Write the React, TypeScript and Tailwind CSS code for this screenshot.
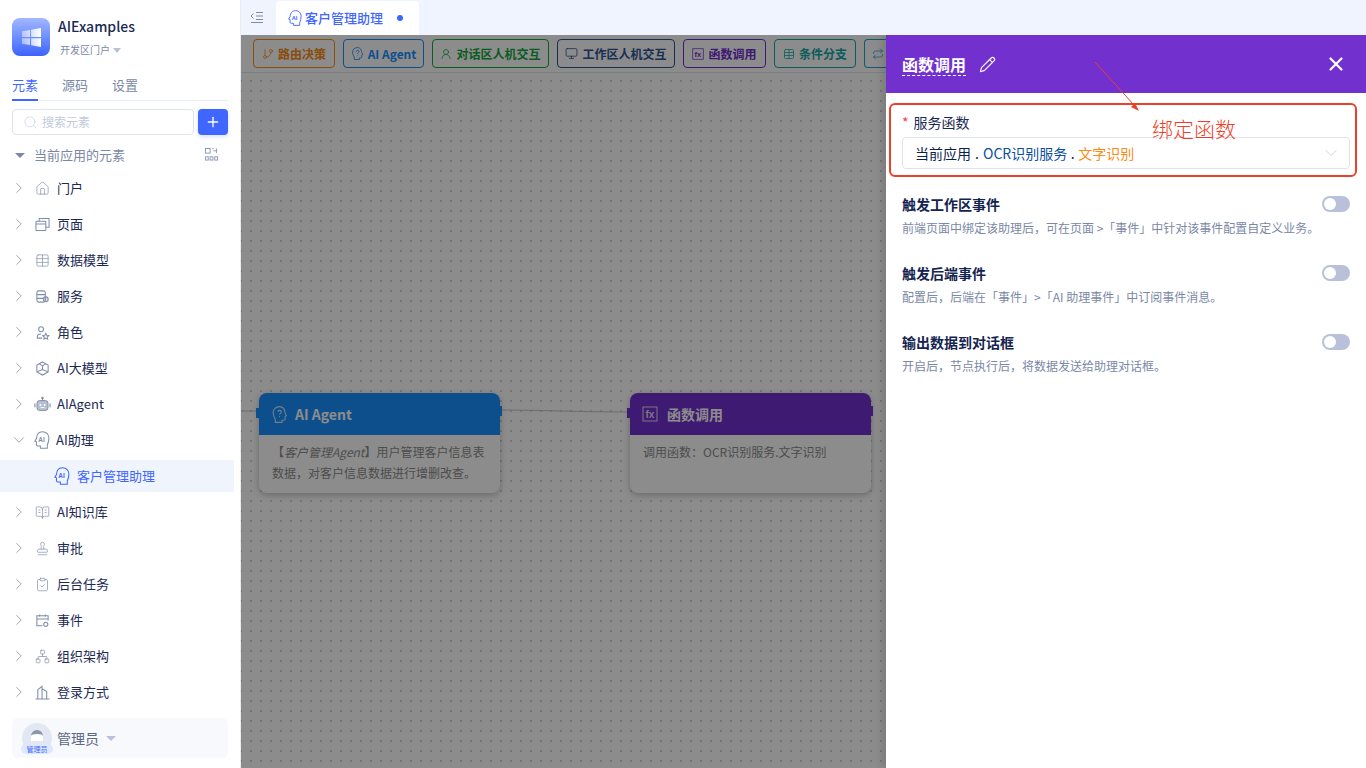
import React from "react";
import { ChevronRight, ChevronDown, Home, Table, GitBranch, Monitor, X, Pencil, Plus, Search, Network, ClipboardCheck, BookOpenText, Stamp, UserRound, Repeat } from "lucide-react";

const AiHead = ({ className }: { className?: string }) => (
  <svg viewBox="2.5 1 13.4 15.6" fill="none" stroke="currentColor" strokeWidth="0.9" className={className}>
    <path d="M4.2 13.2V16h6v-2h2.2c.8 0 1.2-.5 1.2-1.2V10.4l1.4-.5-1.4-2.4C13.4 4 11.4 1.6 8.4 1.6 5 1.6 2.8 4 2.8 7c0 2.4.5 4.2 1.4 6.2z" transform="matrix(-1 0 0 1 18 0)" />
    <text x="6" y="10.6" fontSize="5.6" fill="currentColor" stroke="none" fontFamily="'Liberation Sans', sans-serif" fontWeight="700">AI</text>
  </svg>
);

const QuestionHead = ({ className }: { className?: string }) => (
  <svg viewBox="1 1 16 16" fill="none" stroke="currentColor" strokeWidth="1" className={className}>
    <path d="M5 13.4V16.4h6.4v-2h1.8c.7 0 1.1-.5 1.1-1.1v-2.6l1.2-.5-1.2-2.4C14 4 12 1.6 9 1.6 5.6 1.6 3 4 3 7.2c0 2.4.8 4.4 2 6.2z" />
    <path d="M7.4 6.6c.1-1 .9-1.5 1.7-1.5 1 0 1.7.6 1.7 1.5 0 1.3-1.7 1.3-1.7 2.6" />
    <circle cx="9.1" cy="11" r=".5" fill="currentColor" stroke="none" />
  </svg>
);

const FxBox = ({ className }: { className?: string }) => (
  <svg viewBox="0 0 16 16" fill="none" stroke="currentColor" strokeWidth="1" className={className}>
    <rect x="1" y="1" width="14" height="14" />
    <text x="3.4" y="12" fontSize="10" fill="currentColor" stroke="none" fontFamily="'Liberation Sans', sans-serif">fx</text>
  </svg>
);

const PagesIcon = ({ className }: { className?: string }) => (
  <svg viewBox="0 0 16 16" fill="none" stroke="currentColor" strokeWidth="1.1" className={className}>
    <rect x="1" y="4.5" width="10.5" height="10" rx="1" />
    <path d="M1 7.5h10.5M4.5 4.5V1.5h10.5v9.5h-3.5" />
  </svg>
);

const ServiceIcon = ({ className }: { className?: string }) => (
  <svg viewBox="0 0 16 16" fill="none" stroke="currentColor" strokeWidth="1.1" className={className}>
    <rect x="2" y="2" width="9" height="12" rx="2" />
    <path d="M2 6h9M2 10h7" />
    <circle cx="11.5" cy="11" r="2.6" fill="currentColor" fillOpacity=".3" />
  </svg>
);

const RoleIcon = ({ className }: { className?: string }) => (
  <svg viewBox="0 0 16 16" fill="none" stroke="currentColor" strokeWidth="1.1" className={className}>
    <circle cx="6.5" cy="4.5" r="2.6" />
    <path d="M7.6 14H2.5v-1.5c0-2 1.5-3 4-3" />
    <path d="M11.5 9l1 2 2.2.3-1.6 1.5.4 2.2-2-1.1-2 1.1.4-2.2-1.6-1.5 2.2-.3z" />
  </svg>
);

const EventIcon = ({ className }: { className?: string }) => (
  <svg viewBox="0 0 16 16" fill="none" stroke="currentColor" strokeWidth="1.1" className={className}>
    <path d="M8 13.5H2V3h12v5M2 6.5h12M5 1.5V4M11 1.5V4" />
    <circle cx="11.5" cy="12" r="2.2" />
  </svg>
);

const CubeIcon = ({ className }: { className?: string }) => (
  <svg viewBox="0 0 16 16" fill="none" stroke="currentColor" strokeWidth="1.1" className={className}>
    <path d="M8 1l6 3.4v7.2L8 15l-6-3.4V4.4z" />
    <path d="M8 5.2L4.6 3M8 5.2L11.4 3M8 5.2V9M8 9l-6 2.6M8 9l6 2.6" />
  </svg>
);

const BuildingIcon = ({ className }: { className?: string }) => (
  <svg viewBox="0 0 16 16" fill="none" stroke="currentColor" strokeWidth="1.1" className={className}>
    <path d="M.5 15h15M3 15V5l4.5-3.5V15M7.5 4l5 3V15" />
  </svg>
);

const RobotIcon = ({ className }: { className?: string }) => (
  <svg viewBox="0 0 18 16" className={className}>
    <circle cx="9" cy="1.6" r="1.3" fill="currentColor" />
    <path d="M9 2.5v2" stroke="currentColor" strokeWidth="1.1" />
    <rect x="3.2" y="4.4" width="11.6" height="10.4" rx="2.6" fill="currentColor" fillOpacity=".55" stroke="currentColor" />
    <rect x="6" y="8" width="1.5" height="2" fill="#fff" />
    <rect x="10.5" y="8" width="1.5" height="2" fill="#fff" />
    <path d="M7 11.8h4" stroke="#fff" strokeWidth="1" />
    <path d="M1 7.5v4M17 7.5v4" stroke="currentColor" strokeWidth="1.2" />
  </svg>
);

const WinLogo = () => (
  <svg viewBox="0 0 18 18" className="w-[19px] h-[19px]">
    <defs>
      <linearGradient id="winfade" x1="1" y1="0" x2="0" y2="0">
        <stop offset="0" stopColor="#fff" />
        <stop offset="1" stopColor="#fff" stopOpacity=".45" />
      </linearGradient>
    </defs>
    <path d="M0 3l7.6-1.1V8.6H0zM8.6 1.7L18 0v8.6H8.6zM0 9.6h7.6v6.6L0 15zM8.6 9.6H18V18l-9.4-1.6z" fill="url(#winfade)" />
  </svg>
);

const QrIcon = () => (
  <svg viewBox="0 0 14 14" fill="none" stroke="#8a96b0" strokeWidth="1" className="w-[13px] h-[13px] mb-[2px]">
    <rect x="0.5" y="0.5" width="5" height="5" />
    <path d="M8 .5h1.5M12.5 .5V5.5M9 3h3.5" />
    <rect x="0.5" y="9.5" width="3" height="3.5" />
    <rect x="5.5" y="9.5" width="3" height="3.5" />
    <rect x="10.5" y="9.5" width="3" height="3.5" />
  </svg>
);

type Item = { label: string; icon: React.ReactNode };

const ic = "w-[15px] h-[15px]";
const navItems: Item[] = [
  { label: "门户", icon: <Home className={ic} strokeWidth={1.1} /> },
  { label: "页面", icon: <PagesIcon className={ic} /> },
  { label: "数据模型", icon: <Table className={ic} strokeWidth={1.1} /> },
  { label: "服务", icon: <ServiceIcon className={ic} /> },
  { label: "角色", icon: <RoleIcon className={ic} /> },
  { label: "AI大模型", icon: <CubeIcon className={ic} /> },
  { label: "AIAgent", icon: <RobotIcon className="w-[17px] h-[16px] shrink-0" /> },
];

const navItems2: Item[] = [
  { label: "AI知识库", icon: <BookOpenText className={ic} strokeWidth={1.1} /> },
  { label: "审批", icon: <Stamp className={ic} strokeWidth={1.1} /> },
  { label: "后台任务", icon: <ClipboardCheck className={ic} strokeWidth={1.1} /> },
  { label: "事件", icon: <EventIcon className={ic} /> },
  { label: "组织架构", icon: <Network className={ic} strokeWidth={1.1} /> },
  { label: "登录方式", icon: <BuildingIcon className={ic} /> },
];

function NavRow({ label, icon }: Item) {
  return (
    <div className="h-8 flex items-center pl-[10px] text-[13px] text-[#1b2a55]">
      <ChevronRight className="w-[18px] h-[18px] text-[#7a88a6] mr-[7px]" strokeWidth={1} />
      <span className="w-[15px] flex justify-center text-[#7f8caa] mr-[7px]">{icon}</span>
      {label}
    </div>
  );
}

const tools = [
  { label: "路由决策", w: "w-[82px]", cls: "border-[#fa8c16] text-[#fa8c16]", icon: <GitBranch className="w-[12px] h-[12px]" strokeWidth={1.5} /> },
  { label: "AI Agent", w: "w-[81px]", cls: "border-[#1890ff] text-[#1890ff]", icon: <QuestionHead className="w-[13px] h-[13px]" /> },
  { label: "对话区人机交互", w: "w-[117px]", cls: "border-[#13a83a] text-[#13a83a]", icon: <UserRound className="w-[12px] h-[12px]" strokeWidth={1.5} /> },
  { label: "工作区人机交互", w: "w-[118px]", cls: "border-[#2f5597] text-[#2f5597]", icon: <Monitor className="w-[13px] h-[13px]" strokeWidth={1.5} /> },
  { label: "函数调用", w: "w-[83px]", cls: "border-[#722ed1] text-[#722ed1]", icon: <FxBox className="w-[12px] h-[12px]" /> },
  { label: "条件分支", w: "w-[82px]", cls: "border-[#13a8a8] text-[#13a8a8]", icon: <Table className="w-[12px] h-[12px]" strokeWidth={1.5} /> },
];

function Toggle() {
  return (
    <div className="w-7 h-4 rounded-full bg-[#b8c1d9] flex items-center pl-[2px] shrink-0">
      <div className="w-3 h-3 rounded-full bg-white" />
    </div>
  );
}

const settings = [
  { title: "触发工作区事件", desc: "前端页面中绑定该助理后，可在页面 >「事件」中针对该事件配置自定义业务。" },
  { title: "触发后端事件", desc: "配置后，后端在「事件」>「AI 助理事件」中订阅事件消息。" },
  { title: "输出数据到对话框", desc: "开启后，节点执行后，将数据发送给助理对话框。" },
];

function FlowNode({ left, color, title, gap, icon, children }: { left: string; color: string; title: string; gap: string; icon: React.ReactNode; children: React.ReactNode }) {
  return (
    <div className={`absolute top-[358px] w-[241px] h-[100px] bg-white rounded-lg shadow-[0_2px_6px_rgba(0,0,0,0.25)] ${left}`}>
      <div className={`h-[42px] rounded-t-lg flex items-center pl-[12px] text-white text-[14px] font-bold relative ${color} ${gap}`}>
        {icon}
        {title}
        <span className={`absolute left-[-3px] top-[15px] w-[3px] h-[10px] ${color}`} />
        <span className={`absolute right-[-2px] top-[13px] w-[2px] h-[10px] ${color}`} />
      </div>
      <div className="px-[13px] pt-[6px] text-[12px] leading-[21px] text-[#8c8c8c]">{children}</div>
    </div>
  );
}

export default function App() {
  return (
    <div className="flex h-screen w-full overflow-hidden bg-white font-['Noto_Sans_CJK_SC','Noto_Sans',sans-serif]">
      {/* Sidebar */}
      <aside className="w-[241px] shrink-0 border-r border-[#e8ecf5] flex flex-col">
        <div className="flex pl-[12px] pt-[18px] h-[76px]">
          <div className="w-[38px] h-[38px] rounded-lg bg-gradient-to-b from-[#a3b6ff] to-[#3d62ff] flex items-center justify-center">
            <WinLogo />
          </div>
          <div className="ml-[8px] -mt-[1px]">
            <div className="text-[14px] leading-[18px] text-[#1b2a55] font-medium">AIExamples</div>
            <div className="mt-[7px] ml-[2px] text-[10px] leading-[16px] text-[#7a88a6] flex items-center gap-[3px]">
              开发区门户
              <span className="w-0 h-0 border-x-[4px] border-x-transparent border-t-[5px] border-t-[#b8c1d9]" />
            </div>
          </div>
        </div>

        <div className="mx-[12px] h-[25px] border-b border-[#e8ecf5] flex gap-[24px] text-[13px] text-[#7a88a6]">
          <span className="h-[25px] leading-[18px] border-b-2 border-[#3f66ff] text-[#3f66ff]">元素</span>
          <span className="leading-[18px]">源码</span>
          <span className="leading-[18px]">设置</span>
        </div>

        <div className="mx-[12px] mt-[8px] flex gap-[4px] h-[26px]">
          <div className="flex-1 border border-[#dfe3ee] rounded flex items-center pl-[10px] gap-[4px] text-[12px] text-[#c3cadb]">
            <Search className="w-[15px] h-[15px]" strokeWidth={1} />
            搜索元素
          </div>
          <div className="w-[30px] rounded bg-[#3f66ff] flex items-center justify-center shadow-[0_2px_4px_rgba(63,102,255,0.2)]">
            <Plus className="w-[16px] h-[16px] text-white" strokeWidth={2} />
          </div>
        </div>

        <div className="h-[32px] mt-[4px] flex items-center pl-[15px] pr-[22px] text-[13px] text-[#7a88a6]">
          <span className="w-0 h-0 border-x-[5px] border-x-transparent border-t-[5px] border-t-[#7a88a6] mr-[9px]" />
          <span className="flex-1">当前应用的元素</span>
          <QrIcon />
        </div>

        <div className="flex-1 flex flex-col gap-[4px] mt-[1px]">
          {navItems.map((n) => (
            <NavRow key={n.label} {...n} />
          ))}
          <div className="h-8 flex items-center pl-[10px] text-[13px] text-[#1b2a55]">
            <ChevronDown className="w-[18px] h-[18px] text-[#7a88a6] mr-[6px]" strokeWidth={1} />
            <AiHead className="w-[16px] h-[18px] text-[#7f8caa] mr-[6px]" />
            AI助理
          </div>
          <div className="h-8 w-[234px] bg-[#f0f4fd] flex items-center pl-[54px] text-[13px] text-[#3f66ff]">
            <AiHead className="w-[16px] h-[18px] mr-[7px]" />
            客户管理助理
          </div>
          {navItems2.map((n) => (
            <NavRow key={n.label} {...n} />
          ))}
        </div>

        <div className="mx-[12px] mb-[10px] h-[40px] bg-[#f8f9fc] rounded-md flex items-center pl-[10px] text-[14px] text-[#5a6785]">
          <div className="w-[30px] h-[30px] rounded-full bg-[#e3e7f2] relative flex justify-center mr-[5px]">
            <span className="absolute top-[7px] w-[12px] h-[11px] rounded-t-full bg-[#fff] border-t-[4px] border-[#8a96b0]" />
            <span className="absolute bottom-[-1px] w-[32px] h-[10px] rounded-full bg-[#dfe7ff] text-[7px] leading-[10px] text-center text-[#3f66ff]">管理员</span>
          </div>
          管理员
          <span className="ml-[7px] w-0 h-0 border-x-[5px] border-x-transparent border-t-[5px] border-t-[#b8c1d9]" />
        </div>
      </aside>

      {/* Main */}
      <main className="flex-1 min-w-0 flex flex-col relative">
        <div className="h-[35px] bg-[#f0f4fe] flex items-end pl-[9px] shrink-0">
          <div className="w-[14px] h-[12px] mb-[12px] mr-[12px] text-[#7f8caa]">
            <svg viewBox="0 0 14 12" fill="none" stroke="currentColor" strokeWidth="1" className="w-[14px] h-[12px]">
              <path d="M3.5 2.5L1 5l2.5 2.5M6 1.5h7M6 5h7M6 8.5h7M1 11.5h12" />
            </svg>
          </div>
          <div className="w-[143px] h-[34px] bg-white rounded-t flex items-center pl-[12px] text-[13px] font-medium text-[#3f66ff]">
            <AiHead className="w-[14px] h-[16px] mr-[3px]" />
            客户管理助理
            <span className="ml-[14px] w-[6px] h-[6px] rounded-full bg-[#3f66ff]" />
          </div>
        </div>

        <div className="flex-1 relative overflow-hidden">
          <div className="h-[38px] w-[645px] flex items-start pt-[4px] pl-[12px] gap-[8px] bg-white border-b border-[#e4e6ea] overflow-hidden">
            {tools.map((t) => (
              <div key={t.label} className={`h-[29px] shrink-0 border rounded flex items-center justify-center gap-[4px] text-[12px] font-bold ${t.w} ${t.cls}`}>
                {t.icon}
                {t.label}
              </div>
            ))}
            <div className="h-[29px] w-[30px] shrink-0 border border-r-0 rounded-l border-[#1da6d8] text-[#1da6d8] flex items-center pl-[7px]">
              <Repeat className="w-[12px] h-[12px]" strokeWidth={1.5} />
            </div>
          </div>
          <div className="absolute inset-x-0 bottom-0 top-[38px] bg-white bg-[radial-gradient(#d6d6d6_0.8px,transparent_1px)] bg-[size:10px_10px] bg-[position:5px_3px]" />

          <svg className="absolute left-0 top-[360px] w-[400px] h-[30px]" viewBox="0 0 400 30" fill="none" stroke="#c4c4c4">
            <path d="M0 16h15M258 15C300 15 340 17 386 17" />
          </svg>
          <FlowNode
            left="left-[18px]"
            color="bg-[#1890ff]"
            title="AI Agent"
            gap="gap-[7px]"
            icon={<QuestionHead className="w-[17px] h-[17px] opacity-80" />}
          >
            <div>【<em>客户管理Agent</em><span>】用户管理客户信息表</span></div>
            <div>数据，对客户信息数据进行增删改查。</div>
          </FlowNode>
          <FlowNode
            left="left-[389px]"
            color="bg-[#7230cf]"
            title="函数调用"
            gap="gap-[9px]"
            icon={<FxBox className="w-[16px] h-[16px] opacity-80" />}
          >
            调用函数：OCR识别服务.文字识别
          </FlowNode>

          {/* Mask */}
          <div className="absolute inset-0 bg-black/45" />

          {/* Drawer */}
          <div className="absolute right-0 top-0 bottom-0 w-[480px] bg-white shadow-[-4px_0_8px_rgba(0,0,0,0.12)]">
            <div className="h-[58px] bg-[#7230cf] flex items-center pl-[16px] pr-[19px] text-white">
              <span className="text-[16px] leading-[22px] font-bold border-b border-dashed border-white">函数调用</span>
              <Pencil className="w-[17px] h-[17px] ml-[13px]" strokeWidth={1.6} />
              <X className="w-[22px] h-[22px] ml-auto" strokeWidth={2.4} />
            </div>

            <div className="px-[16px] pt-[19px]">
              <div className="text-[14px] leading-[20px] text-[#1b2a55] mb-[5px]">
                <span className="text-[#e5484d] mr-[5px]">*</span>服务函数
              </div>
              <div className="h-[32px] border border-[#dfe3ee] rounded flex items-center pl-[12px] pr-[8px] text-[14px] text-[#0b1f4b]">
                当前应用
                <span className="w-[12px] text-center">.</span>
                <span className="text-[#0a4fa0]">OCR识别服务</span>
                <span className="w-[11px] text-center">.</span>
                <span className="text-[#fa8c16]">文字识别</span>
                <ChevronDown className="w-[20px] h-[20px] ml-auto text-[#c3cadb]" strokeWidth={1} />
              </div>

              <div className="mt-[23px] flex flex-col gap-[21px]">
                {settings.map((s) => (
                  <div key={s.title} className="h-[48px]">
                    <div className="flex items-center justify-between h-[24px] text-[14px] font-bold text-[#14244f]">
                      {s.title}
                      <Toggle />
                    </div>
                    <div className="h-[24px] leading-[24px] text-[12px] text-[#7a88a6]">{s.desc}</div>
                  </div>
                ))}
              </div>
            </div>

            {/* Annotation */}
            <div className="absolute left-[3px] top-[68px] w-[468px] h-[74px] border-2 border-[#ee3f2a] rounded-md" />
            <svg className="absolute left-[200px] top-[20px] w-[70px] h-[70px]" viewBox="0 0 70 70" fill="none">
              <path d="M9 7L48 50" stroke="#e8412c" strokeWidth="1" />
              <path d="M53 56l-8-4 4-4z" fill="#e8412c" />
            </svg>
            <div className="absolute left-[266px] top-[78px] text-[21px] leading-[30px] text-[#ee3f2a] font-light">绑定函数</div>
          </div>
        </div>
      </main>
    </div>
  );
}
